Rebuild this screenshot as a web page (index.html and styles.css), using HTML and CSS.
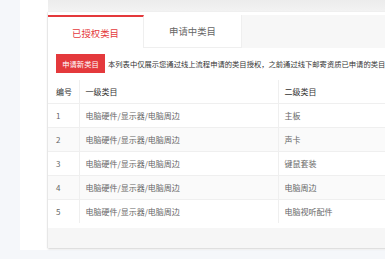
FILE: index.html
```html
<!DOCTYPE html>
<html lang="zh-CN">
<head>
<meta charset="utf-8">
<link rel="stylesheet" href="styles.css">
</head>
<body>
<div class="wrap">
  <div class="topband"></div>
  <div class="panel">
    <div class="tabs">
      <div class="tab active">已授权类目</div>
      <div class="tab">申请中类目</div>
    </div>
    <div class="toolbar">
      <button class="btn">申请新类目</button>
      <span class="desc">本列表中仅展示您通过线上流程申请的类目授权，之前通过线下邮寄资质已申请的类目暂不在此展示，如需查看请联系对应的采销人员</span>
    </div>
    <table class="grid">
      <thead>
        <tr><th class="c-no">编号</th><th class="c-one">一级类目</th><th class="c-two">二级类目</th></tr>
      </thead>
      <tbody>
        <tr><td class="c-no">1</td><td>电脑硬件/显示器/电脑周边</td><td>主板</td></tr>
        <tr><td class="c-no">2</td><td>电脑硬件/显示器/电脑周边</td><td>声卡</td></tr>
        <tr><td class="c-no">3</td><td>电脑硬件/显示器/电脑周边</td><td>键鼠套装</td></tr>
        <tr><td class="c-no">4</td><td>电脑硬件/显示器/电脑周边</td><td>电脑周边</td></tr>
        <tr><td class="c-no">5</td><td>电脑硬件/显示器/电脑周边</td><td>电脑视听配件</td></tr>
      </tbody>
    </table>
    <div class="spacer"></div>
    <div class="footer"></div>
  </div>
</div>
</body>
</html>
```
FILE: styles.css
```css
html, body {
  margin: 0;
  padding: 0;
}
body {
  width: 385px;
  height: 259px;
  overflow: hidden;
  background: #f5f7fa;
  font-family: "Noto Sans CJK SC", "Noto Sans", sans-serif;
}
.wrap {
  margin-left: 20px;
  width: 700px;
  height: 250px;
  background: #fff;
  padding-left: 28px;
  box-sizing: border-box;
}
.topband {
  height: 12px;
  background: linear-gradient(#ececec, #f3f3f3);
}
.panel {
  width: 672px;
  height: 236px;
  background: #fff;
  padding-top: 3px;
  box-sizing: border-box;
  box-shadow: 0 1px 2px rgba(0, 0, 0, 0.18), -1px 0 1px rgba(0, 0, 0, 0.04);
  display: flex;
  flex-direction: column;
}
.tabs {
  display: flex;
  height: 33px;
  background: #f7f7f7;
}
.tab {
  width: 96px;
  display: flex;
  align-items: center;
  justify-content: center;
  font-size: 9.4px;
  color: #666;
  background: #fff;
  box-sizing: border-box;
  border-right: 1px solid #efefef;
  border-bottom: 1px solid #efefef;
}
.tab + .tab {
  width: 98px;
}
.tab.active {
  color: #e4393c;
  border-top: 2px solid #e4393c;
  border-bottom: none;
  border-right: 1px solid #efefef;
}
.toolbar {
  display: flex;
  align-items: center;
  gap: 3px;
  padding: 6px 8px 7px;
  white-space: nowrap;
}
.btn {
  height: 19px;
  width: 49px;
  padding: 0;
  border: none;
  background: #e4393c;
  color: #fff;
  font-family: inherit;
  font-size: 7.3px;
  flex: none;
}
.desc {
  font-size: 7.3px;
  color: #333;
}
.grid {
  border-collapse: collapse;
  width: 100%;
  font-size: 8px;
  color: #666;
  table-layout: fixed;
}
.grid th {
  font-weight: normal;
  color: #333;
  text-align: left;
  height: 23px;
  padding: 0 0 0 6px;
  border-bottom: 1px solid #efefef;
  box-sizing: border-box;
}
.grid td {
  height: 24px;
  padding: 0 0 0 6px;
  border-bottom: 1px solid #efefef;
  box-sizing: border-box;
}
.grid th, .grid td {
  border-right: 1px solid #efefef;
}
.grid th.c-no, .grid td.c-no {
  padding-left: 8px;
}
.grid th.c-no {
  width: 31px;
}
.grid th.c-one {
  width: 199px;
}
.grid tbody tr:nth-child(even) td {
  background: #fafafa;
}
.grid tbody tr:last-child td {
  border-bottom: none;
}
.spacer {
  height: 5px;
}
.footer {
  flex: 1;
  background: #f6f6f6;
}
```
